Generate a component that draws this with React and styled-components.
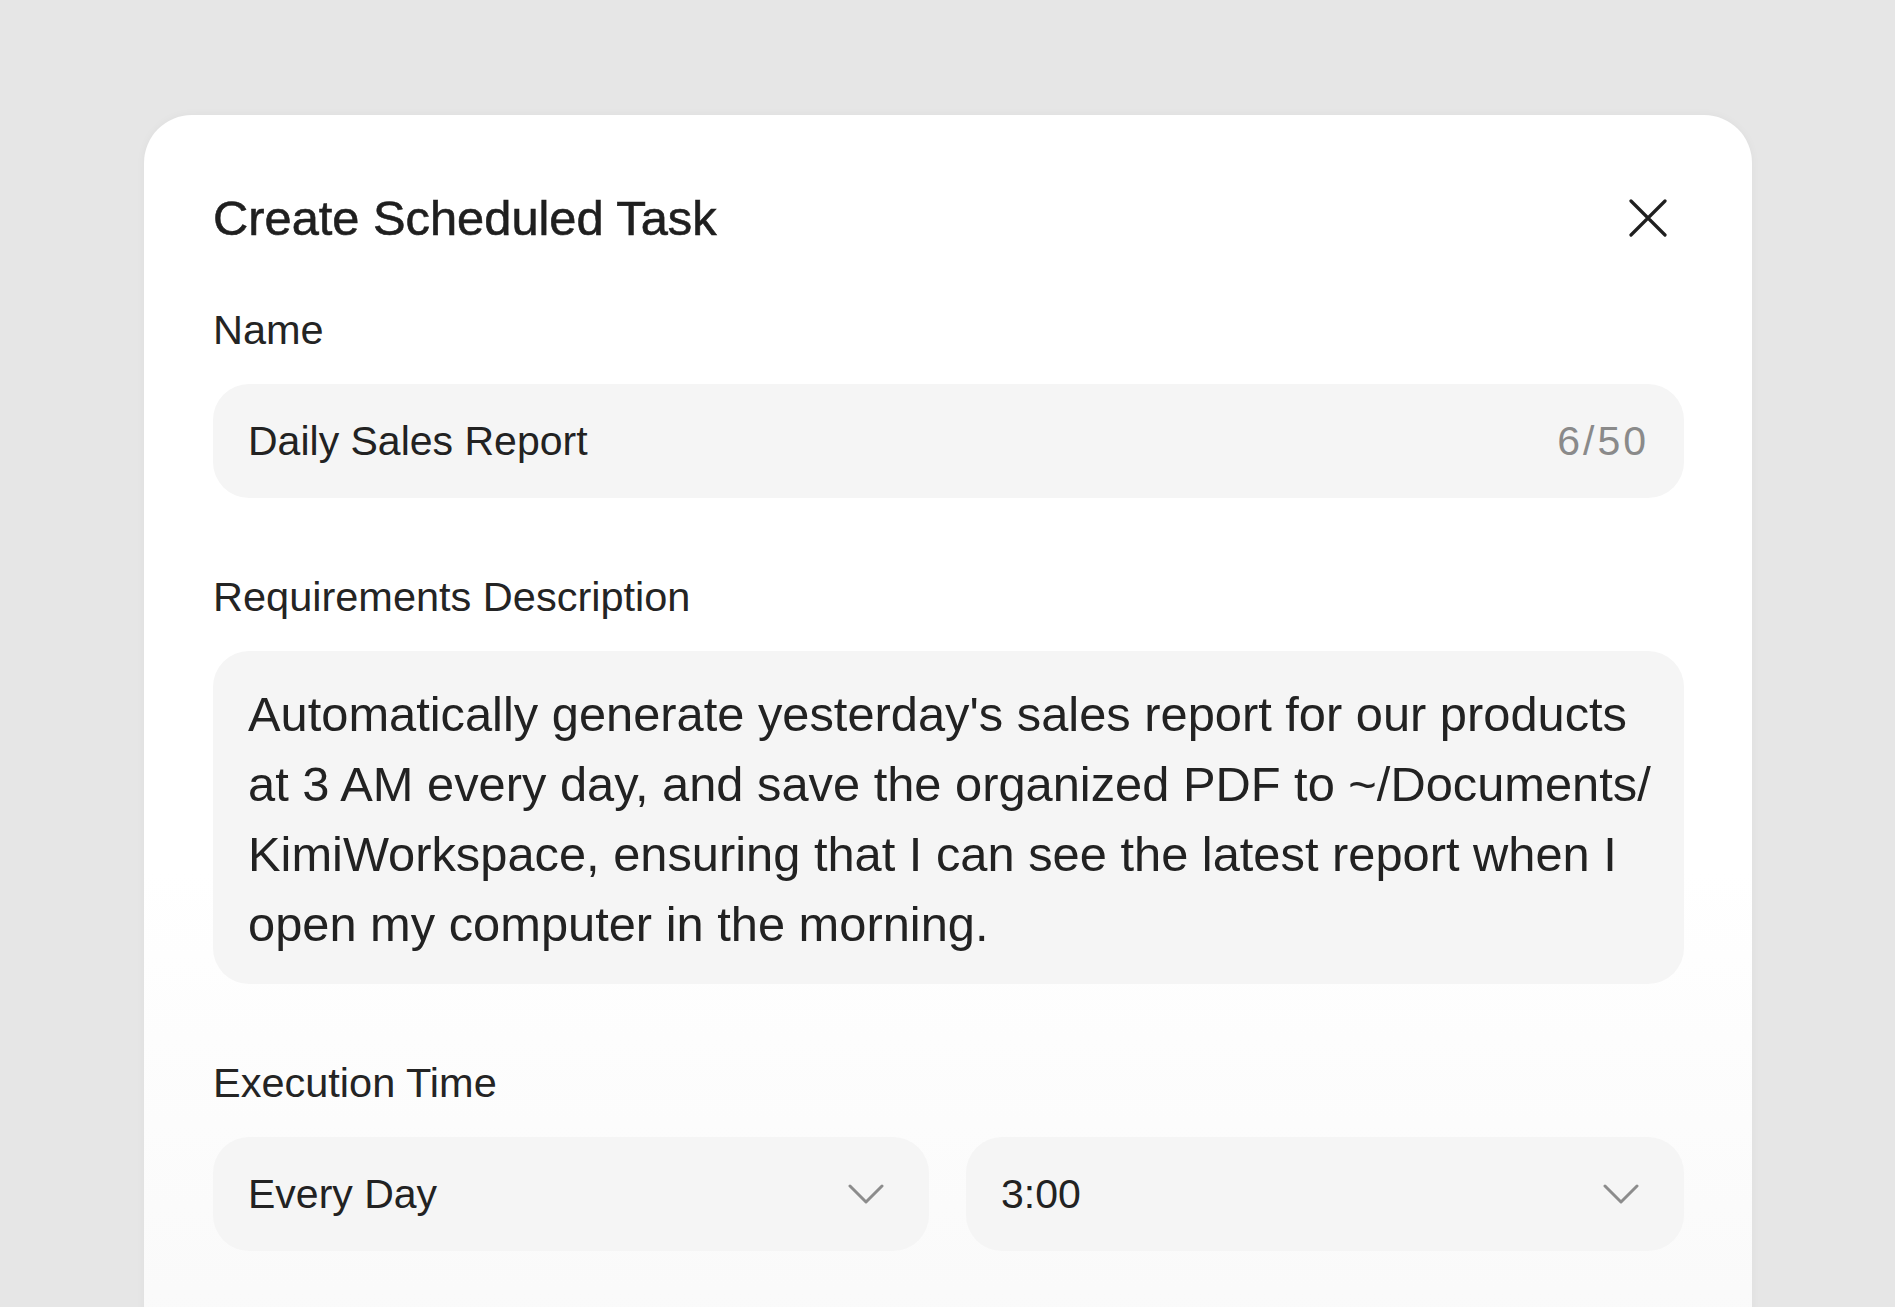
import React from "react";
import styled, { createGlobalStyle } from "styled-components";

const GlobalStyle = createGlobalStyle`
  html, body {
    margin: 0;
    padding: 0;
    background: #e6e6e6;
  }
  body {
    font-family: "Liberation Sans", Arial, sans-serif;
    color: #1f1f1f;
  }
`;

const Page = styled.div`
  width: 1895px;
  height: 1307px;
  overflow: hidden;
  padding: 115px 143px 0 144px;
  box-sizing: border-box;
`;

const Card = styled.div`
  height: 1260px;
  background: linear-gradient(180deg, #ffffff 0%, #ffffff 60%, #f9f9f9 100%);
  border-radius: 48px;
  box-shadow: 0 0 10px rgba(0, 0, 0, 0.04);
  padding: 74px 68px 0 69px;
  box-sizing: border-box;
  display: flex;
  flex-direction: column;
`;

const Header = styled.div`
  display: flex;
  align-items: center;
  justify-content: space-between;
  height: 58px;
`;

const Title = styled.h1`
  margin: 0;
  font-size: 48.8px;
  line-height: 58px;
  font-weight: 400;
  -webkit-text-stroke: 0.6px #1f1f1f;
  color: #1f1f1f;
`;

const CloseButton = styled.button`
  border: none;
  background: none;
  padding: 0;
  margin-right: 17px;
  width: 38px;
  height: 38px;
  display: flex;
  cursor: pointer;
`;

const Field = styled.div`
  display: flex;
  flex-direction: column;
  gap: 29px;
  margin-top: ${(p) => p.top}px;
`;

const Label = styled.div`
  font-size: 41.5px;
  line-height: 50px;
  color: #242424;
`;

const InputBox = styled.div`
  height: 114px;
  border-radius: 36px;
  background: #f5f5f5;
  display: flex;
  align-items: center;
  justify-content: space-between;
  padding: 0 38px 0 35px;
  box-sizing: border-box;
`;

const Value = styled.span`
  font-size: 41px;
  color: #222;
`;

const Counter = styled.span`
  font-size: 41px;
  letter-spacing: 3px;
  margin-right: -3px;
  color: #8a8a8a;
`;

const TextArea = styled.div`
  height: 333px;
  border-radius: 36px;
  background: #f5f5f5;
  padding: 28px 35px 0;
  box-sizing: border-box;
  font-size: 48.8px;
  line-height: 70px;
  color: #222;
  white-space: nowrap;
`;

const SelectRow = styled.div`
  display: grid;
  grid-template-columns: 716px 1fr;
  gap: 37px;
`;

const Select = styled(InputBox)`
  padding: 0 44px 0 35px;
`;

const CloseIcon = () => (
  <svg width="38" height="38" viewBox="0 0 38 38" fill="none">
    <path d="M2 2 L36 36 M36 2 L2 36" stroke="#1f1f1f" strokeWidth="3.2" strokeLinecap="round" />
  </svg>
);

const Chevron = () => (
  <svg width="38" height="20" viewBox="0 0 38 20" fill="none">
    <path d="M3 2 L19 18 L35 2" stroke="#8c8c8c" strokeWidth="3" strokeLinecap="round" strokeLinejoin="round" />
  </svg>
);

const lines = [
  "Automatically generate yesterday's sales report for our products",
  "at 3 AM every day, and save the organized PDF to ~/Documents/",
  "KimiWorkspace, ensuring that I can see the latest report when I",
  "open my computer in the morning.",
];

export default function App() {
  return (
    <>
      <GlobalStyle />
      <Page>
        <Card>
          <Header>
            <Title>Create Scheduled Task</Title>
            <CloseButton aria-label="Close">
              <CloseIcon />
            </CloseButton>
          </Header>

          <Field top={58}>
            <Label>Name</Label>
            <InputBox>
              <Value>Daily Sales Report</Value>
              <Counter>6/50</Counter>
            </InputBox>
          </Field>

          <Field top={74}>
            <Label>Requirements Description</Label>
            <TextArea>
              {lines.map((l, i) => (
                <div key={i}>{l}</div>
              ))}
            </TextArea>
          </Field>

          <Field top={74}>
            <Label>Execution Time</Label>
            <SelectRow>
              <Select>
                <Value>Every Day</Value>
                <Chevron />
              </Select>
              <Select>
                <Value>3:00</Value>
                <Chevron />
              </Select>
            </SelectRow>
          </Field>
        </Card>
      </Page>
    </>
  );
}
